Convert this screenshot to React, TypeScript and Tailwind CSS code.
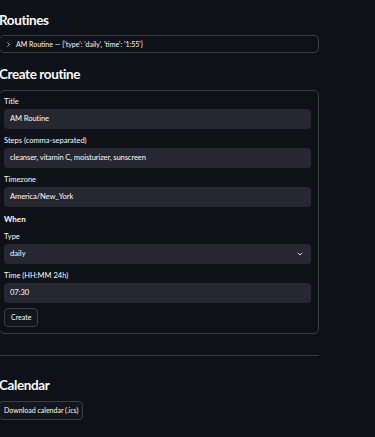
import { ChevronRight, ChevronDown } from 'lucide-react';

function Field({ label, value }: { label: string; value: string }) {
  return (
    <div className="flex flex-col">
      <label className="text-[7.5px] leading-[11px] h-[11px] mb-[2px]">{label}</label>
      <div className="h-[19.5px] rounded-[4px] bg-[#262730] pl-[6px] flex items-center text-[7.6px] tracking-[-0.1px]">{value}</div>
    </div>
  );
}

export default function App() {
  return (
    <div className="min-h-screen w-[375px] h-[437px] overflow-hidden bg-[#0e1117] text-[#fafafa] [font-family:Lato,'Liberation_Sans',sans-serif]">
      <div className="ml-[-1px] w-[320px] flex flex-col">
        <h3 className="mt-[11px] h-[18px] leading-[18px] text-[13.5px] font-bold tracking-[-0.4px]">Routines</h3>
        <div className="mt-[6px] h-[18px] border border-[#3b3d44] rounded-[5px] flex items-center pl-[5px] text-[7px]">
          <ChevronRight className="w-[7px] h-[7px] mr-[4px]" strokeWidth={2.5} />
          <span>AM Routine — {"{'type': 'daily', 'time': '1:55'}"}</span>
        </div>
        <h3 className="mt-[12px] h-[18px] leading-[18px] text-[13.5px] font-bold tracking-[-0.4px]">Create routine</h3>
        <form className="mt-[7px] h-[244px] border border-[#3b3d44] rounded-[5px] pt-[5px] pl-[4px] pr-[7px] flex flex-col">
          <Field label="Title" value="AM Routine" />
          <div className="h-[6.5px]" />
          <Field label="Steps (comma-separated)" value="cleanser, vitamin C, moisturizer, sunscreen" />
          <div className="h-[6.5px]" />
          <Field label="Timezone" value="America/New_York" />
          <div className="mt-[6.5px] h-[12px] leading-[12px] text-[8px] font-bold">When</div>
          <div className="h-[6px]" />
          <div className="flex flex-col">
            <label className="text-[7.5px] leading-[11px] h-[11px] mb-[2px]">Type</label>
            <div className="h-[19.5px] rounded-[4px] bg-[#262730] pl-[6px] pr-[7px] flex items-center justify-between text-[7.6px]">
              <span>daily</span>
              <ChevronDown className="w-[8px] h-[8px]" strokeWidth={2.5} />
            </div>
          </div>
          <div className="h-[6.5px]" />
          <Field label="Time (HH:MM 24h)" value="07:30" />
          <button
            type="button"
            className="mt-[5.5px] self-start h-[19px] px-[6px] rounded-[4px] border border-[#3b3d44] bg-[#13161d] text-[7px]"
          >
            Create
          </button>
        </form>
        <div className="mt-[21px] h-px bg-[#3b3d44]" />
        <h3 className="mt-[20px] h-[18px] leading-[18px] text-[13.5px] font-bold tracking-[-0.4px]">Calendar</h3>
        <button
          type="button"
          className="mt-[7px] self-start h-[19px] px-[4px] rounded-[4px] border border-[#3b3d44] bg-[#13161d] text-[7px]"
        >
          Download calendar (.ics)
        </button>
      </div>
    </div>
  );
}
